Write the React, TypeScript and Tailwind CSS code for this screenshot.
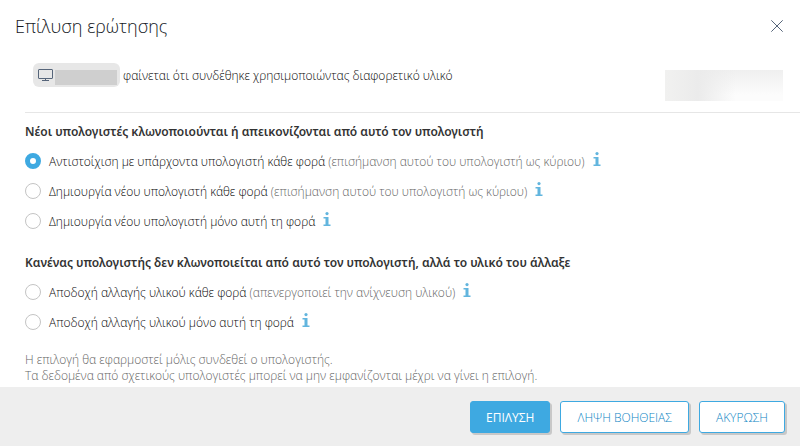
import { useState } from "react";

type Option = {
  id: string;
  label: string;
  hint?: string;
};

const clonedOptions: Option[] = [
  {
    id: "match",
    label: "Αντιστοίχιση με υπάρχοντα υπολογιστή κάθε φορά",
    hint: "(επισήμανση αυτού του υπολογιστή ως κύριου)",
  },
  {
    id: "create-always",
    label: "Δημιουργία νέου υπολογιστή κάθε φορά",
    hint: "(επισήμανση αυτού του υπολογιστή ως κύριου)",
  },
  { id: "create-once", label: "Δημιουργία νέου υπολογιστή μόνο αυτή τη φορά" },
];

const hardwareOptions: Option[] = [
  {
    id: "accept-always",
    label: "Αποδοχή αλλαγής υλικού κάθε φορά",
    hint: "(απενεργοποιεί την ανίχνευση υλικού)",
  },
  { id: "accept-once", label: "Αποδοχή αλλαγής υλικού μόνο αυτή τη φορά" },
];

function MonitorIcon() {
  return (
    <svg width="15" height="12" viewBox="0 0 15 12" fill="none" stroke="#56657a">
      <rect x="0.5" y="0.5" width="14" height="9" rx="0.5" />
      <path d="M7.5 9.5v2M4 11.5h7" />
    </svg>
  );
}

function CloseIcon() {
  return (
    <svg width="12" height="12" viewBox="0 0 12 12" fill="none" stroke="#56657a">
      <path d="M0.3 0.3l11.4 11.4M11.7 0.3L0.3 11.7" />
    </svg>
  );
}

function InfoIcon() {
  return (
    <svg width="8" height="14" viewBox="0 0 8 14" fill="#62b5de">
      <circle cx="4" cy="1.6" r="1.6" />
      <path d="M0.5 5h5v7.5h2V14h-7v-1.5h2v-6h-2z" />
    </svg>
  );
}

type GroupProps = {
  title: string;
  options: Option[];
  selected: string;
  onSelect: (id: string) => void;
};

function OptionGroup({ title, options, selected, onSelect }: GroupProps) {
  return (
    <fieldset>
      <legend className="mb-[5px] font-['Noto_Sans','Open_Sans',sans-serif] leading-[18px] font-semibold text-[#333333]">
        {title}
      </legend>
      {options.map((option) => (
        <div key={option.id} className="flex h-[30px] items-center">
          <input
            type="radio"
            name="resolution"
            id={option.id}
            checked={selected === option.id}
            onChange={() => onSelect(option.id)}
            className="size-4 shrink-0 appearance-none rounded-full border border-[#c4c4c4] bg-white checked:border-[5px] checked:border-[#3ea9e1]"
          />
          <label htmlFor={option.id} className="pt-[2px] pl-2 text-[#0a0a0a]">
            {option.label}
            {option.hint && <span className="text-[#666666]"> {option.hint}</span>}
          </label>
          <button type="button" aria-label="Πληροφορίες" className="ml-2 pb-1">
            <InfoIcon />
          </button>
        </div>
      ))}
    </fieldset>
  );
}

export default function App() {
  const [selected, setSelected] = useState("match");

  return (
    <div className="flex min-h-screen flex-col bg-white font-['Open_Sans','Noto_Sans',sans-serif] text-xs leading-4 font-light">
      <header className="flex h-[52px] items-center justify-between pr-[17px] pl-[15px]">
        <h1 className="text-lg font-light text-[#14181e]">Επίλυση ερώτησης</h1>
        <button type="button" aria-label="Κλείσιμο">
          <CloseIcon />
        </button>
      </header>

      <main className="flex flex-1 flex-col pb-[3px] pl-[25px]">
        <div className="flex h-[61px] items-start justify-between border-b border-[#e6e6e6] pt-[11px] pr-[17px] pl-2">
          <div className="flex items-center gap-[3px] text-[#0a0a0a]">
            <div className="flex h-6 items-center gap-[2px] rounded-md bg-[#e7e7e7] pr-[3px] pl-[5px]">
              <MonitorIcon />
              <span className="mt-[5px] h-[15px] w-[62px] bg-[#cfcfcf]" />
            </div>
            <p className="pt-[2px]">φαίνεται ότι συνδέθηκε χρησιμοποιώντας διαφορετικό υλικό</p>
          </div>
          <div className="mt-[7px] h-[31px] w-[118px] bg-[linear-gradient(to_right,#f1f1f0,#ebebeb_28%,#ebebeb00_60%),linear-gradient(#efefef,#fcfcfc_80%)]" />
        </div>

        <div className="flex flex-col gap-[18px] pt-[10px]">
          <OptionGroup
            title="Νέοι υπολογιστές κλωνοποιούνται ή απεικονίζονται από αυτό τον υπολογιστή"
            options={clonedOptions}
            selected={selected}
            onSelect={setSelected}
          />
          <OptionGroup
            title="Κανένας υπολογιστής δεν κλωνοποιείται από αυτό τον υπολογιστή, αλλά το υλικό του άλλαξε"
            options={hardwareOptions}
            selected={selected}
            onSelect={setSelected}
          />
        </div>

        <p className="pt-[15px] text-[#666666]">
          Η επιλογή θα εφαρμοστεί μόλις συνδεθεί ο υπολογιστής.
          <br />
          Τα δεδομένα από σχετικούς υπολογιστές μπορεί να μην εμφανίζονται μέχρι να γίνει η επιλογή.
        </p>
      </main>

      <footer className="flex h-[59px] items-start justify-end gap-[10px] bg-[#eeeeee] pt-[14px] pr-[15px]">
        <button
          type="button"
          className="h-8 rounded-[3px] border border-[#3ea9e1] bg-[#3ea9e1] px-[15px] pt-[2px] font-normal text-white shadow-[2px_2px_0_#c8c8c8]"
        >
          ΕΠΙΛΥΣΗ
        </button>
        <button
          type="button"
          className="h-8 rounded-[3px] border border-[#3ea9e1] bg-white px-4 pt-[2px] text-[#0e86c4] shadow-[2px_2px_0_#c8c8c8]"
        >
          ΛΗΨΗ ΒΟΗΘΕΙΑΣ
        </button>
        <button
          type="button"
          className="h-8 rounded-[3px] border border-[#3ea9e1] bg-white px-4 pt-[2px] text-[#0e86c4] shadow-[2px_2px_0_#c8c8c8]"
        >
          ΑΚΥΡΩΣΗ
        </button>
      </footer>
    </div>
  );
}
